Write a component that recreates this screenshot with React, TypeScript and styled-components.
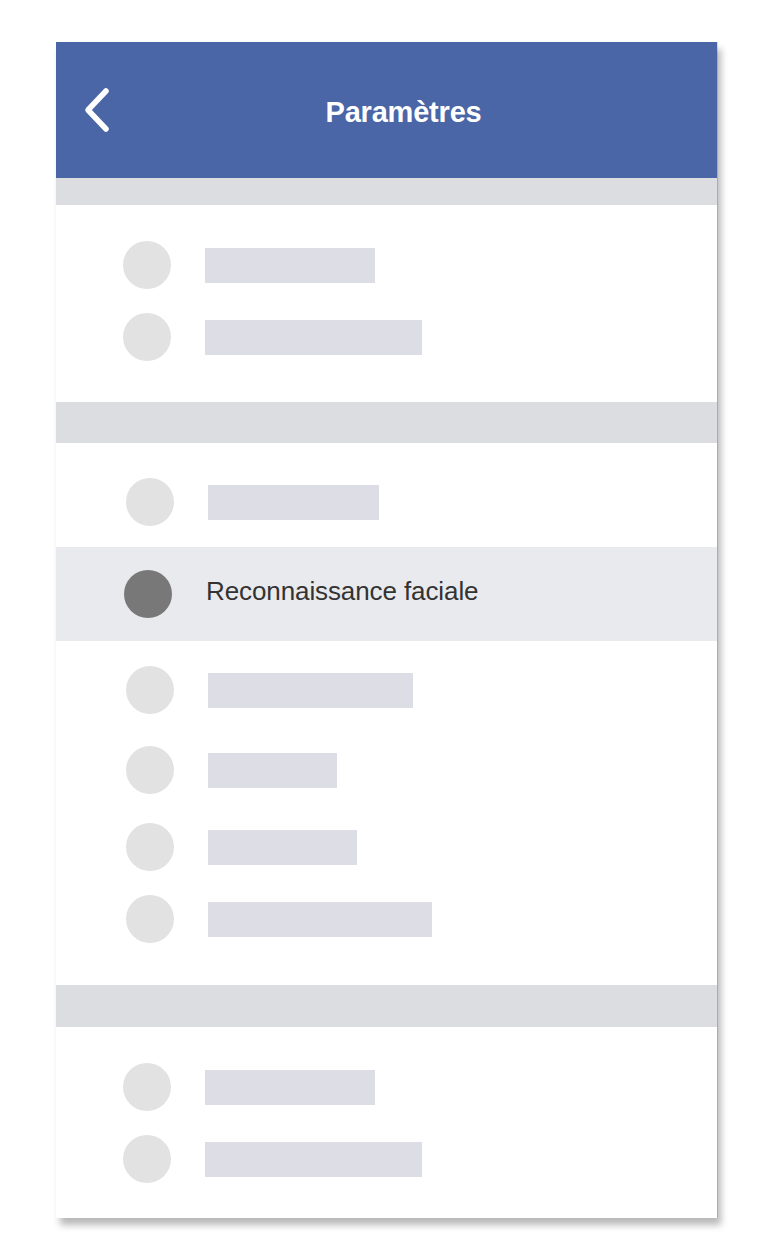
import React from "react";
import styled, { createGlobalStyle } from "styled-components";

const Global = createGlobalStyle`
  html, body { margin: 0; padding: 0; background: #ffffff; }
  body { font-family: "Liberation Sans", Arial, sans-serif; }
`;

const Page = styled.div`
  padding: 42px 0 0 56px;
  width: 770px;
  height: 1257px;
  box-sizing: border-box;
`;

const Card = styled.div`
  width: 661px;
  display: flex;
  flex-direction: column;
  background: #ffffff;
  box-shadow: 4px 7px 7px rgba(0, 0, 0, 0.28), 1px 0 0 rgba(0, 0, 0, 0.12);
`;

const Header = styled.header`
  height: 136px;
  background: #4a66a6;
  display: grid;
  grid-template-columns: 80px 1fr 80px;
  align-items: center;
`;

const BackButton = styled.button`
  border: 0;
  background: none;
  padding: 0 0 0 26px;
  display: flex;
  align-items: center;
  cursor: pointer;
`;

const Title = styled.h1`
  margin: 0;
  text-align: center;
  color: #ffffff;
  font-size: 29px;
  font-weight: 700;
  letter-spacing: -0.2px;
  padding: 4px 0 0 34px;
`;

const Band = styled.div<{ $h: number }>`
  height: ${(p) => p.$h}px;
  background: #dcdde1;
`;

const Section = styled.section<{ $pt: number; $pb: number }>`
  display: flex;
  flex-direction: column;
  padding: ${(p) => p.$pt}px 0 ${(p) => p.$pb}px;
`;

const Row = styled.div<{ $h: number; $indent: number; $active?: boolean }>`
  height: ${(p) => p.$h}px;
  display: flex;
  align-items: center;
  padding-left: ${(p) => p.$indent}px;
  background: ${(p) => (p.$active ? "#e9eaee" : "transparent")};
`;

const Spacer = styled.div<{ $h: number }>`
  height: ${(p) => p.$h}px;
`;

const Dot = styled.span<{ $dark?: boolean }>`
  flex: none;
  width: 48px;
  height: 48px;
  border-radius: 50%;
  background: ${(p) => (p.$dark ? "#787878" : "#e2e2e2")};
`;

const Bar = styled.span<{ $w: number }>`
  flex: none;
  margin-left: 34px;
  width: ${(p) => p.$w}px;
  height: 35px;
  background: #dddde6;
`;

const Label = styled.span`
  margin-left: 34px;
  padding-bottom: 6px;
  font-size: 26px;
  color: #333333;
  letter-spacing: -0.1px;
`;

type RowSpec =
  | { kind: "bar"; h: number; w: number }
  | { kind: "label"; h: number; label: string }
  | { kind: "gap"; h: number };

const Chevron = () => (
  <svg width="32" height="48" viewBox="0 0 32 48">
    <polyline
      points="24,5 6,24 24,43"
      fill="none"
      stroke="#ffffff"
      strokeWidth="5.5"
      strokeLinecap="round"
      strokeLinejoin="round"
    />
  </svg>
);

const Group = ({
  rows,
  indent,
  pt,
  pb,
}: {
  rows: RowSpec[];
  indent: number;
  pt: number;
  pb: number;
}) => (
  <Section $pt={pt} $pb={pb}>
    {rows.map((r, i) => {
      if (r.kind === "gap") return <Spacer key={i} $h={r.h} />;
      if (r.kind === "label")
        return (
          <Row key={i} $h={r.h} $indent={indent - 2} $active>
            <Dot $dark />
            <Label>{r.label}</Label>
          </Row>
        );
      return (
        <Row key={i} $h={r.h} $indent={indent}>
          <Dot />
          <Bar $w={r.w} />
        </Row>
      );
    })}
  </Section>
);

export default function App() {
  return (
    <>
      <Global />
      <Page>
        <Card>
          <Header>
            <BackButton aria-label="Retour">
              <Chevron />
            </BackButton>
            <Title>Paramètres</Title>
            <span />
          </Header>
          <Band $h={27} />
          <Group
            pt={24}
            pb={29}
            indent={67}
            rows={[
              { kind: "bar", h: 72, w: 170 },
              { kind: "bar", h: 72, w: 217 },
            ]}
          />
          <Band $h={41} />
          <Group
            pt={23}
            pb={30}
            indent={70}
            rows={[
              { kind: "bar", h: 72, w: 171 },
              { kind: "gap", h: 9 },
              { kind: "label", h: 94, label: "Reconnaissance faciale" },
              { kind: "gap", h: 10 },
              { kind: "bar", h: 78, w: 205 },
              { kind: "bar", h: 82, w: 129 },
              { kind: "bar", h: 72, w: 149 },
              { kind: "bar", h: 72, w: 224 },
            ]}
          />
          <Band $h={42} />
          <Group
            pt={24}
            pb={23}
            indent={67}
            rows={[
              { kind: "bar", h: 72, w: 170 },
              { kind: "bar", h: 72, w: 217 },
            ]}
          />
        </Card>
      </Page>
    </>
  );
}
